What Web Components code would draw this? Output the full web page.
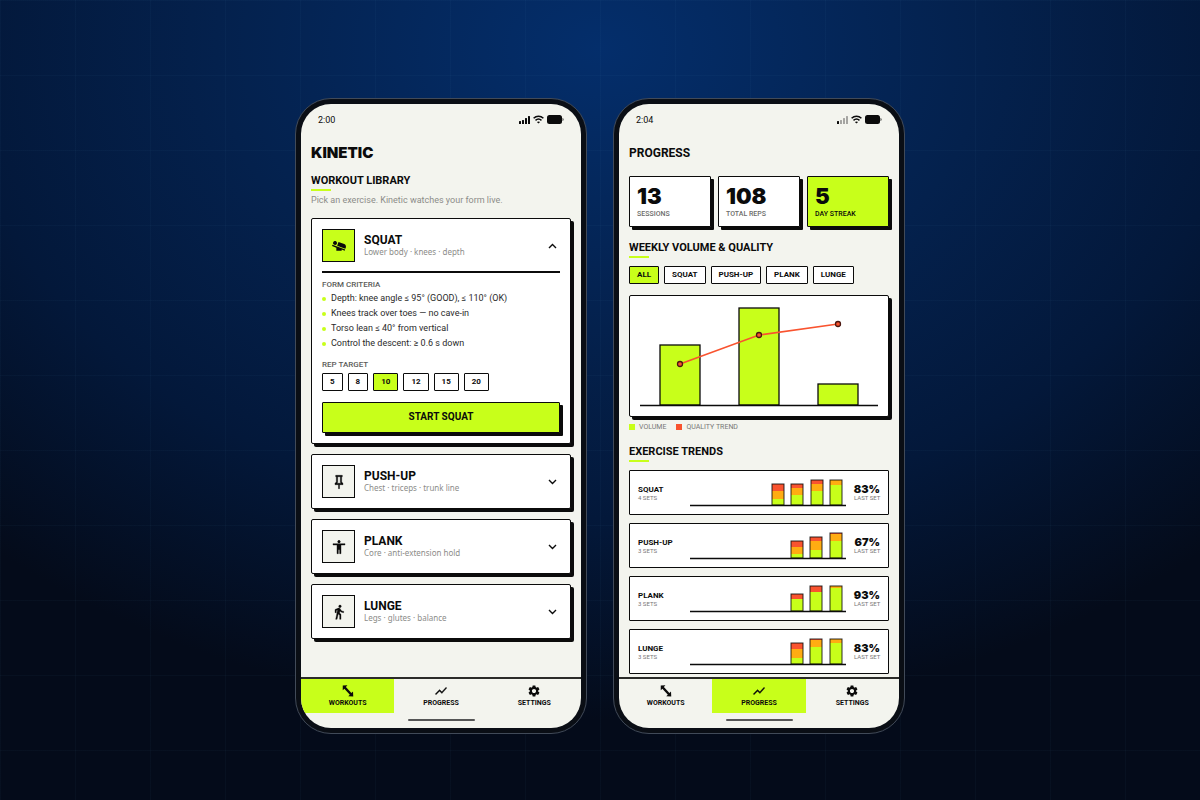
<!DOCTYPE html>
<html lang="en">
<head>
<meta charset="utf-8">
<meta name="viewport" content="width=device-width, initial-scale=1">
<title>Kinetic</title>
<style>
  :root {
    --ink: #0b0b0b;
    --paper: #f3f4ee;
    --lime: #c8ff1a;
    --amber: #ffac12;
    --red: #f9532f;
    --muted: #8c8c89;
  }
  body {
    margin: 0;
    min-height: 100vh;
    font-family: Roboto, "Liberation Sans", sans-serif;
    color: var(--ink);
    background:
      repeating-linear-gradient(90deg, rgba(90, 160, 200, .04) 0 1px, transparent 1px 75px),
      repeating-linear-gradient(0deg, transparent 0 49px, rgba(90, 160, 200, .04) 49px 50px, transparent 50px 75px),
      radial-gradient(ellipse 76% 84% at 50% 6%, #042e6b 0%, #04214d 42%, #03183a 70%, #040b1a 100%);
  }
</style>
</head>
<body>
<phone-stage>
  <app-phone time="2:00" tab="workouts" signal="4">
    <brand-title>KINETIC</brand-title>
    <section-title>WORKOUT LIBRARY</section-title>
    <intro-text>Pick an exercise. Kinetic watches your form live.</intro-text>
    <card-stack>
      <exercise-card name="SQUAT" icon="squat" detail="Lower body · knees · depth" open>
        <criteria-list heading="FORM CRITERIA" items="Depth: knee angle ≤ 95° (GOOD), ≤ 110° (OK)|Knees track over toes — no cave-in|Torso lean ≤ 40° from vertical|Control the descent: ≥ 0.6 s down"></criteria-list>
        <rep-target heading="REP TARGET"><chip-group options="5,8,10,12,15,20" selected="10"></chip-group></rep-target>
        <start-button>START SQUAT</start-button>
      </exercise-card>
      <exercise-card name="PUSH-UP" icon="pushup" detail="Chest · triceps · trunk line"></exercise-card>
      <exercise-card name="PLANK" icon="plank" detail="Core · anti-extension hold"></exercise-card>
      <exercise-card name="LUNGE" icon="lunge" detail="Legs · glutes · balance"></exercise-card>
    </card-stack>
  </app-phone>

  <app-phone time="2:04" tab="progress" signal="1">
    <brand-title plain>PROGRESS</brand-title>
    <stat-row>
      <stat-card value="13" label="SESSIONS"></stat-card>
      <stat-card value="108" label="TOTAL REPS"></stat-card>
      <stat-card value="5" label="DAY STREAK" active></stat-card>
    </stat-row>
    <section-title>WEEKLY VOLUME &amp; QUALITY</section-title>
    <filter-bar><chip-group options="ALL,SQUAT,PUSH-UP,PLANK,LUNGE" selected="ALL"></chip-group></filter-bar>
    <volume-chart></volume-chart>
    <section-title>EXERCISE TRENDS</section-title>
    <trend-list>
      <trend-row name="SQUAT" sets="4 SETS" score="83%" bars="6,8,7;10,7,4;14,7,4;20,5,0"></trend-row>
      <trend-row name="PUSH-UP" sets="3 SETS" score="67%" bars="4,7,6;8,9,4;17,7,1"></trend-row>
      <trend-row name="PLANK" sets="3 SETS" score="93%" bars="12,0,5;19,0,6;23,2,0"></trend-row>
      <trend-row name="LUNGE" sets="3 SETS" score="83%" bars="6,9,6;17,7,1;21,4,0"></trend-row>
    </trend-list>
  </app-phone>
</phone-stage>

<script>
const ICONS = {
  squat: '<path d="M22.25 14.29l-.69 1.89L9.2 11.71l2.08-5.66 8.56 3.09c2.1.76 3.18 3.06 2.41 5.15zM1.5 12.14L8 14.48V19h8v-1.63L20.52 19l.69-1.89-19.02-6.86-.69 1.89zm5.8-1.94c1.49-.72 2.12-2.51 1.41-4C7.99 4.71 6.2 4.08 4.7 4.8c-1.49.71-2.12 2.5-1.4 4 .71 1.49 2.5 2.12 4 1.4z"/>',
  pushup: '<path d="M16 12V4h1V2H7v2h1v8l-2 2v2h5.2v6h1.6v-6H18v-2l-2-2zm-7.2 2l1.2-1.2V4h4v8.8l1.2 1.2H8.8z" stroke="currentColor" stroke-width=".6"/>',
  plank: '<path d="M12 2c1.100 0 2 .9 2 2s-.9 2-2 2-2-.9-2-2 .9-2 2-2zm9 7h-6v13h-2v-6h-2v6H9V9H3V7h18v2z" stroke="currentColor" stroke-width=".6"/>',
  lunge: '<path d="M13.500 5.500c1.100 0 2-.9 2-2s-.9-2-2-2-2 .9-2 2 .9 2 2 2zM9.800 8.900L7 23h2.100l1.800-8 2.100 2v6h2v-7.500l-2.100-2 .6-3C14.800 12 16.800 13 19 13v-2c-1.900 0-3.500-1-4.300-2.400l-1-1.600c-.4-.6-1-1-1.700-1-.3 0-.5.1-.8.1L6 8.300V13h2V9.600l1.800-.7z" stroke="currentColor" stroke-width=".5"/>',
  workouts: '<path d="M3 2.500l8-.5-2.600 3 9.400 10.600 2.800-2.600.4 8.600-8.600-.4 2.800-2.600L5.800 8 3 10.800z"/>',
  progress: '<path d="M3.5 18.49l6-6.01 4 4L22 6.92l-1.41-1.41-7.09 7.97-4-4L2 16.99z" stroke="currentColor" stroke-width=".5"/>',
  settings: '<path d="M19.14 12.94c.04-.3.06-.61.06-.94 0-.32-.02-.64-.07-.94l2.03-1.58c.18-.14.23-.41.12-.61l-1.92-3.32c-.12-.22-.37-.29-.59-.22l-2.39.96c-.5-.38-1.03-.7-1.62-.94l-.36-2.54c-.04-.24-.24-.41-.48-.41h-3.84c-.24 0-.43.17-.47.41l-.36 2.54c-.59.24-1.13.57-1.62.94l-2.39-.96c-.22-.08-.47 0-.59.22L2.74 8.87c-.12.21-.08.47.12.61l2.03 1.58c-.05.3-.09.63-.09.94s.02.64.07.94l-2.03 1.58c-.18.14-.23.41-.12.61l1.92 3.32c.12.22.37.29.59.22l2.39-.96c.5.38 1.03.7 1.62.94l.36 2.54c.05.24.24.41.48.41h3.84c.24 0 .44-.17.47-.41l.36-2.54c.59-.24 1.13-.56 1.62-.94l2.39.96c.22.08.47 0 .59-.22l1.92-3.32c.12-.22.07-.47-.12-.61l-2.01-1.58zM12 15.6c-1.98 0-3.6-1.62-3.6-3.6s1.62-3.6 3.6-3.6 3.6 1.62 3.6 3.6-1.62 3.6-3.6 3.6z"/>'
};
const icon = (name, size) =>
  `<svg width="${size}" height="${size}" viewBox="0 0 24 24" fill="currentColor" aria-hidden="true">${ICONS[name]}</svg>`;

/* Registers an element whose shadow root is built from its attributes. */
function define(tag, css, markup) {
  customElements.define(tag, class extends HTMLElement {
    constructor() {
      super();
      this.attachShadow({ mode: 'open' });
    }
    connectedCallback() {
      this.shadowRoot.innerHTML =
        `<style>:host{display:block}*{box-sizing:border-box}svg{display:block}${css}</style>` + markup(this);
    }
  });
}
const slot = () => '<slot></slot>';
const attr = (el, name) => el.getAttribute(name) || '';

define('phone-stage', `
  :host { display: flex; flex-wrap: wrap; justify-content: center; align-items: flex-start;
    gap: 26px; padding: 98px 20px 20px; }
`, slot);

define('app-phone', `
  :host { flex: 0 1 292px; display: flex; box-sizing: border-box; min-height: 636px;
    border: 1px solid #414a58; border-radius: 36px; background: #0a0e15; padding: 5px; }
  .screen { flex: 1; min-width: 0; display: flex; flex-direction: column; overflow: hidden;
    background: var(--paper); border-radius: 30px; }
  .status { display: flex; align-items: center; gap: 3px; height: 31px; padding: 0 17px; font-size: 9px; }
  .status time { margin-right: auto; }
  main { display: flex; flex-direction: column; padding: 11px 10px 0; }
  .home { width: 67px; height: 2px; margin: 6px auto 7px; border-radius: 1px; background: #555; }
  tab-bar { margin-top: auto; }
`, el => {
  const lit = Number(attr(el, 'signal'));
  const bars = [3, 4, 6, 8].map((h, i) =>
    `<rect x="${i * 3}" y="${8 - h}" width="2" height="${h}" rx=".5" fill="${i < lit ? '#0b0b0b' : '#a5a5a2'}"/>`).join('');
  return `<div class="screen">
    <div class="status"><time>${attr(el, 'time')}</time>
      <svg width="11" height="8" viewBox="0 0 11 8" aria-hidden="true">${bars}</svg>
      <svg width="11" height="9" viewBox="0 0 11 9" fill="none" stroke="#0b0b0b" stroke-width="1.5" aria-hidden="true"><path d="M.6 3.300C3.400.5 7.600.5 10.400 3.300M2.500 5.400c1.800-1.600 4.200-1.600 6 0"/><path d="M5.500 8.600L3.900 7c1-.8 2.200-.8 3.200 0z" fill="#0b0b0b" stroke="none"/></svg>
      <svg width="17" height="9" viewBox="0 0 17 9" fill="#0b0b0b" aria-hidden="true"><rect width="15" height="9" rx="2.500"/><path d="M15.600 2.800c1.200.6 1.200 2.800 0 3.400z"/></svg>
    </div>
    <main><slot></slot></main>
    <tab-bar current="${attr(el, 'tab')}"></tab-bar>
    <div class="home"></div>
  </div>`;
});

define('brand-title', `
  h1 { margin: 0; font: 900 15px/14px Inter, sans-serif; }
  :host([plain]) h1 { font: 700 12px/14px Roboto, sans-serif; }
`, () => '<h1><slot></slot></h1>');

define('section-title', `
  :host { margin-top: 15px; }
  h2 { margin: 0; font-size: 11px; line-height: 12px; font-weight: 700; }
  h2::after { content: ""; display: block; width: 20px; height: 2px; margin-top: 2px; background: var(--lime); }
`, () => '<h2><slot></slot></h2>');

define('intro-text', `
  p { margin: 4px 0 0; font-size: 9px; line-height: 10px; color: var(--muted); }
`, () => '<p><slot></slot></p>');

define('card-stack', `
  :host { display: grid; gap: 10px; margin-top: 13px; padding-bottom: 20px; }
`, slot);

define('exercise-card', `
  :host { background: #fff; border: 1px solid var(--ink); border-radius: 2px; box-shadow: 3px 3px 0 var(--ink); padding: 10px; }
  button { display: flex; align-items: center; gap: 9px; width: 100%; padding: 0; border: 0;
    background: none; color: inherit; font: inherit; text-align: left; }
  .tile { display: grid; place-items: center; width: 33px; height: 33px; border: 1px solid var(--ink); background: var(--paper); }
  :host([open]) .tile { background: var(--lime); }
  .text { flex: 1; padding-bottom: 2px; }
  .name { display: block; font-size: 12px; line-height: 14px; font-weight: 700; }
  .detail { display: block; font: 8px/10px "Noto Sans", sans-serif; color: var(--muted); }
  .chevron { margin-right: 3px; }
  :host([open]) .chevron { transform: rotate(180deg); }
  .body { border-top: 2px solid var(--ink); margin-top: 9px; padding-top: 7px; }
`, el => `
  <button type="button" aria-expanded="${el.hasAttribute('open')}">
    <span class="tile">${icon(attr(el, 'icon'), 16)}</span>
    <span class="text"><span class="name">${attr(el, 'name')}</span><span class="detail">${attr(el, 'detail')}</span></span>
    <svg class="chevron" width="9" height="6" viewBox="0 0 9 6" fill="none" stroke="currentColor" stroke-width="1.4" aria-hidden="true"><path d="M1 1l3.500 3.500L8 1"/></svg>
  </button>
  ${el.hasAttribute('open') ? '<div class="body"><slot></slot></div>' : ''}`);

define('criteria-list', `
  h3 { margin: 0 0 1px; font-size: 8px; line-height: 10px; font-weight: 500; color: #5c5c5a; }
  ul { margin: 0; padding: 0; list-style: none; font-size: 9px; line-height: 15px; color: #2a2a2a; }
  li { display: flex; align-items: center; gap: 5px; }
  li::before { content: ""; width: 4px; height: 4px; border-radius: 50%; background: var(--lime); }
`, el => `<h3>${attr(el, 'heading')}</h3><ul>${attr(el, 'items').split('|').map(t => `<li>${t}</li>`).join('')}</ul>`);

define('rep-target', `
  :host { margin-top: 9px; }
  h3 { margin: 0 0 3px; font-size: 8px; line-height: 10px; font-weight: 500; color: #5c5c5a; }
`, el => `<h3>${attr(el, 'heading')}</h3><slot></slot>`);

define('chip-group', `
  :host { display: flex; flex-wrap: wrap; gap: 5px; }
  button { height: 18px; min-width: 20px; padding: 0 7px; border: 1px solid var(--ink); border-radius: 1px;
    background: #fff; color: var(--ink); font: 700 8px/16px Roboto, sans-serif; }
  button[aria-pressed="true"] { background: var(--lime); }
`, el => attr(el, 'options').split(',').map(o =>
  `<button type="button" aria-pressed="${o === attr(el, 'selected')}">${o}</button>`).join(''));

define('start-button', `
  button { display: block; width: 100%; height: 31px; margin-top: 11px; padding: 0 0 2px; border: 1px solid var(--ink); border-radius: 1px;
    box-shadow: 3px 3px 0 var(--ink); background: var(--lime); color: var(--ink); font: 700 10px/12px Roboto, sans-serif; }
`, () => '<button type="button"><slot></slot></button>');

define('stat-row', `
  :host { display: grid; grid-template-columns: repeat(3, 1fr); gap: 7px; margin-top: 16px; }
`, slot);

define('stat-card', `
  :host { border: 1px solid var(--ink); border-radius: 1px; box-shadow: 3px 3px 0 var(--ink); background: #fff; padding: 8px 7px 7px; }
  :host([active]) { background: var(--lime); }
  b { display: block; font: 900 22px/22px Inter, sans-serif; }
  span { display: block; margin-top: 2px; font-size: 7px; line-height: 10px; font-weight: 500; color: #6c6c6a; }
  :host([active]) span { color: var(--ink); }
`, el => `<b>${attr(el, 'value')}</b><span>${attr(el, 'label')}</span>`);

define('filter-bar', `
  :host { margin-top: 8px; }
`, slot);

define('volume-chart', `
  figure { margin: 11px 0 0; }
  .plot { border: 1px solid var(--ink); border-radius: 2px; box-shadow: 3px 3px 0 var(--ink); background: #fff; }
  .plot svg { width: 100%; height: auto; }
  figcaption { display: flex; gap: 10px; margin-top: 5px; margin-bottom: -1px; font-size: 7px; line-height: 10px; color: #777; }
  figcaption span { display: flex; align-items: center; gap: 4px; }
  i { width: 6px; height: 6px; background: var(--lime); }
  .trend i { background: var(--red); }
`, () => {
  const bars = [[30, 49], [109, 12], [188, 88]].map(([x, y]) =>
    `<rect x="${x}" y="${y}" width="40" height="${109 - y}"/>`).join('');
  const points = [[50, 68], [129, 39], [208, 28]];
  return `<figure>
    <div class="plot"><svg viewBox="0 0 258 120" role="img" aria-label="Weekly volume and quality trend">
      <g fill="#c8ff1a" stroke="#0b0b0b" stroke-width="1.3">${bars}</g>
      <path d="M10 109.500H248" stroke="#0b0b0b" stroke-width="1.3"/>
      <polyline points="${points.join(' ')}" fill="none" stroke="#f9532f" stroke-width="1.6"/>
      <g fill="#f9532f" stroke="#4a1710" stroke-width="1.3">${points.map(([x, y]) => `<circle cx="${x}" cy="${y}" r="2.500"/>`).join('')}</g>
    </svg></div>
    <figcaption><span><i></i>VOLUME</span><span class="trend"><i></i>QUALITY TREND</span></figcaption>
  </figure>`;
});

define('trend-list', `
  :host { display: grid; gap: 8px; margin-top: 8px; }
`, slot);

define('trend-row', `
  :host { display: grid; grid-template-columns: 52px 1fr 26px; align-items: center; height: 45px; box-sizing: border-box;
    border: 1px solid var(--ink); border-radius: 1px; background: #fff; padding: 1px 8px 0; }
  b, span { display: block; }
  .name { font-size: 8px; line-height: 9px; font-weight: 700; }
  .small { font-size: 6px; line-height: 8px; color: #777; }
  .chart { padding-right: 8px; }
  .chart svg { width: 100%; height: auto; }
  .result { text-align: right; white-space: nowrap; }
  .score { display: flex; justify-content: flex-end; padding-top: 1px; font: 900 11px/9px Inter, sans-serif; }
`, el => {
  const stacks = attr(el, 'bars').split(';').map(s => s.split(',').map(Number));
  const first = 82 + (4 - stacks.length) * 19;
  const drawn = stacks.map((parts, i) => {
    const x = first + i * 19 + Math.floor(i / 2);
    const total = parts[0] + parts[1] + parts[2];
    let y = 26;
    const fills = parts.map((h, k) => {
      y -= h;
      return `<rect x="${x}" y="${y}" width="12" height="${h}" fill="${['#c8ff1a', '#ffac12', '#f9532f'][k]}"/>`;
    }).join('');
    return `${fills}<rect x="${x}" y="${26 - total}" width="12" height="${total}" fill="none" stroke="#0b0b0b" stroke-opacity=".85"/>`;
  }).join('');
  return `<div><b class="name">${attr(el, 'name')}</b><span class="small">${attr(el, 'sets')}</span></div>
    <div class="chart"><svg viewBox="0 0 156 28" role="img" aria-label="${attr(el, 'name')} trend">${drawn}<path d="M0 26.500H156" stroke="#0b0b0b" stroke-width="1.3"/></svg></div>
    <div class="result"><b class="score">${attr(el, 'score')}</b><span class="small">LAST SET</span></div>`;
});

define('tab-bar', `
  nav { display: grid; grid-template-columns: repeat(3, 1fr); border-top: 2px solid #2b2b29; }
  a { display: flex; flex-direction: column; align-items: center; gap: 1px; height: 34px; padding-top: 5px;
    color: var(--ink); text-decoration: none; font-size: 7px; line-height: 9px; font-weight: 700; }
  a[aria-current] { background: var(--lime); }
`, el => `<nav>${['workouts', 'progress', 'settings'].map(t =>
  `<a href="#${t}"${t === attr(el, 'current') ? ' aria-current="page"' : ''}>${icon(t, 14)}${t.toUpperCase()}</a>`).join('')}</nav>`);
</script>
</body>
</html>
